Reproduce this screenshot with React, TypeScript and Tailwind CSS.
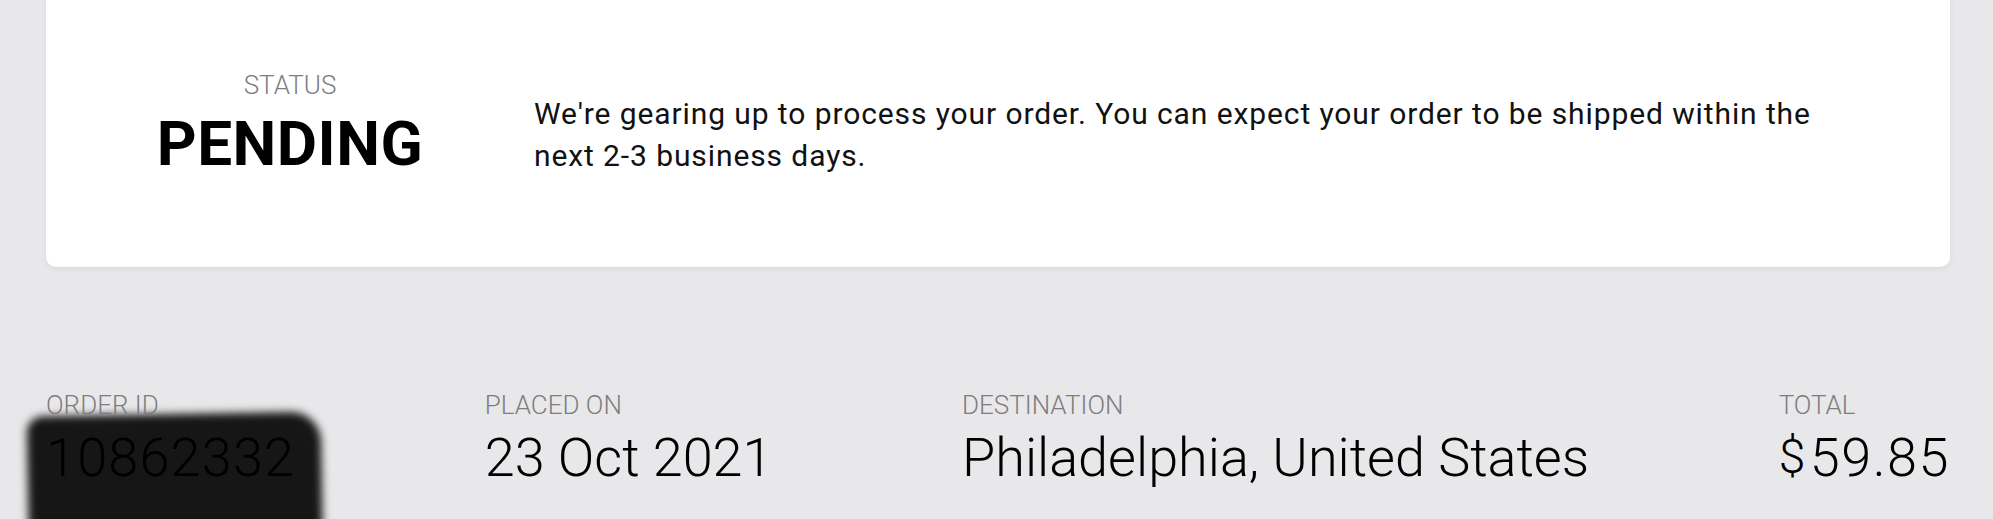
import React from 'react';

const details = [
    { label: 'ORDER ID', value: '10862332', redacted: true },
    { label: 'PLACED ON', value: '23 Oct 2021' },
    { label: 'DESTINATION', value: 'Philadelphia, United States' },
    { label: 'TOTAL', value: '59.85', currency: true },
];

const App: React.FC = () => {
    return (
        <div className="min-h-[519px] w-full overflow-hidden bg-[#e8e8ea] pl-[46px] pr-[43px] font-['Roboto',sans-serif] text-black">
            {/* status card, its top runs off the screen */}
            <div className="-mt-[22px] flex h-[289px] rounded-[10px] bg-white shadow-[0_2px_6px_rgba(0,0,0,0.06)]">
                <div className="flex w-[488px] shrink-0 flex-col items-center pt-[94px]">
                    <span className="text-[26px] font-light leading-none text-[#7d7d7d]">STATUS</span>
                    <span className="mt-[15px] text-[62px] font-bold leading-none tracking-[0.5px]">PENDING</span>
                </div>
                <p className="w-[1310px] pt-[115px] text-[30px] leading-[42px] tracking-[0.9px] text-[#111]">
                    We're gearing up to process your order. You can expect your order to be shipped within the next 2-3 business days.
                </p>
            </div>

            <div className="mt-[125px] flex justify-between">
                {details.map((d) => (
                    <div key={d.label} className="relative flex flex-col">
                        {d.redacted && (
                            <div className="absolute left-[-18px] top-[22px] h-[160px] w-[294px] -rotate-1 rounded-tl-[16px] rounded-tr-[30px] bg-[#161616] blur-[4px]" />
                        )}
                        <span className="relative text-[26px] font-light leading-none text-[#7d7d7d]">{d.label}</span>
                        <span className={`relative mt-[13px] flex items-start text-[54px] font-light leading-none ${d.redacted ? 'tracking-[1.2px]' : ''} ${d.currency ? 'tracking-[1.5px]' : ''}`}>
                            {d.currency && <span className="mr-[3px] mt-[2px] text-[48px] leading-none">$</span>}
                            {d.value}
                        </span>
                    </div>
                ))}
            </div>
        </div>
    );
};

export default App;
